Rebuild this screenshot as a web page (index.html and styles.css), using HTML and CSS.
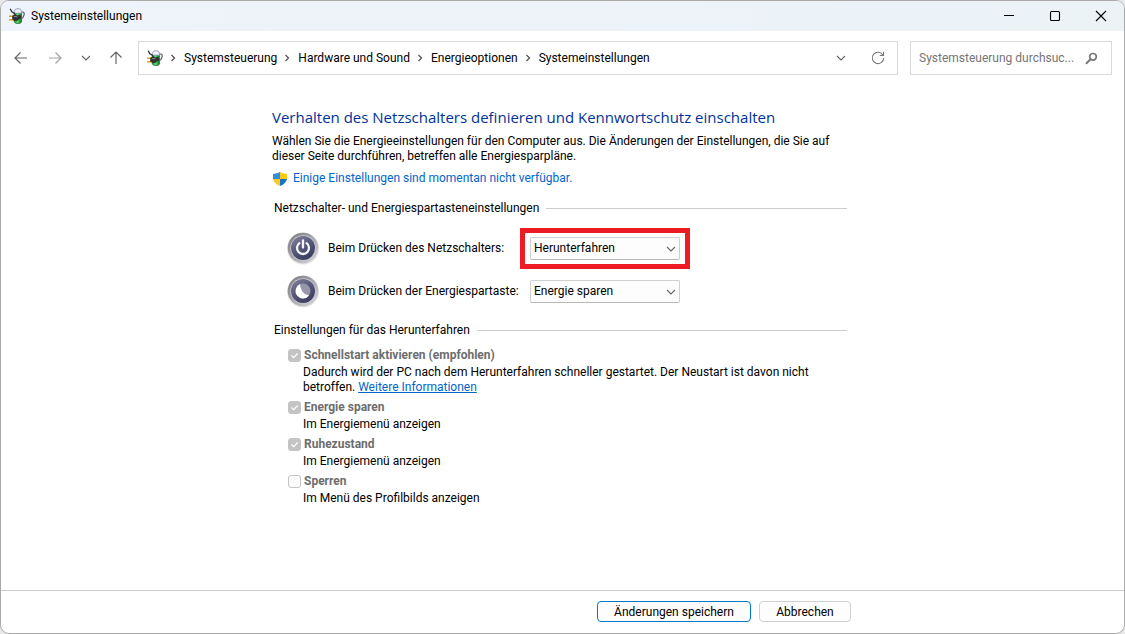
FILE: index.html
```html
<!DOCTYPE html>
<html lang="de">
<head>
<meta charset="utf-8">
<meta name="viewport" content="width=device-width, initial-scale=1">
<title>Systemeinstellungen</title>
<link rel="stylesheet" href="styles.css">
</head>
<body>
<svg width="0" height="0" class="defs" aria-hidden="true">
  <defs>
    <linearGradient id="cell" x1="0" x2="1"><stop offset="0" stop-color="#1d8a2c"/><stop offset=".45" stop-color="#4fe066"/><stop offset="1" stop-color="#0d6a1c"/></linearGradient>
    <linearGradient id="rim" x1="0" x2="1" y1="0" y2="1"><stop offset="0" stop-color="#77777b"/><stop offset=".5" stop-color="#a9a9ad"/><stop offset="1" stop-color="#dcdce0"/></linearGradient>
    <linearGradient id="face" x1="0" x2=".6" y1="0" y2="1"><stop offset="0" stop-color="#85859f"/><stop offset=".5" stop-color="#5b5b7c"/><stop offset="1" stop-color="#3d3d60"/></linearGradient>
    <symbol id="battery" viewBox="0 0 16 16">
      <path d="M12 4h2q1.500.4 1.200 2.500l-1.700 4" fill="none" stroke="#5b6268" stroke-width="1.200"/>
      <path d="M5.200 4v9.300Q5.500 15.700 9 15.700t3.600-2.400V4z" fill="url(#cell)" stroke="#27613a" stroke-width=".7"/>
      <path d="M5.200 3.500Q5.500.6 9 .6t3.600 2.900v1.700H5.200z" fill="#eef0fb" stroke="#7d87b3" stroke-width=".7"/>
      <path d="M1.200.7l1.600 3 2.500 1.500 1 2" fill="none" stroke="#333" stroke-width="1.300"/>
      <path d="M0 8.300h4M0 11.700h4" stroke="#d9a514" stroke-width="1.600"/>
      <path d="M3.200 7.800L6 6.500l2.600 1 1.900-.7 1.600 1.200v2.500l-2.300 1-1.800 1.600-3-.3-1.800-1.500z" fill="#303030"/>
      <path d="M4.800 8.500l3.700.3" stroke="#8c8c8c"/>
    </symbol>
    <symbol id="crumb" viewBox="0 0 6 8"><path d="M1.500 1L4.500 4l-3 3" fill="none" stroke="#555" stroke-width="1.300"/></symbol>
    <symbol id="down" viewBox="0 0 10 6"><path d="M1 1l4 4 4-4" fill="none" stroke="currentColor" stroke-width="1.100"/></symbol>
    <symbol id="tick" viewBox="0 0 13 13"><path d="M3.500 6.500l2.200 2.200 4-4.200" fill="none" stroke="#fff" stroke-width="1.100"/></symbol>
  </defs>
</svg>
<div class="window">
  <header class="titlebar">
    <svg class="app-icon" aria-hidden="true"><use href="#battery"/></svg>
    <span class="title">Systemeinstellungen</span>
    <button class="caption" aria-label="Minimieren"><svg width="12" height="12"><path d="M1 5.500h10" stroke="#000"/></svg></button>
    <button class="caption" aria-label="Maximieren"><svg width="12" height="12"><rect x="1.500" y="1.500" width="9" height="9" rx="1" fill="none" stroke="#000" stroke-width="1.100"/></svg></button>
    <button class="caption" aria-label="Schließen"><svg width="12" height="12"><path d="M1 1l10 10M11 1L1 11" stroke="#000" stroke-width="1.100"/></svg></button>
  </header>
  <nav class="toolbar" aria-label="Navigation">
    <div class="history">
      <button class="nav-button" aria-label="Zurück"><svg width="14" height="14"><path d="M13 7H1.500M6.500 1.500L1 7l5.500 5.500" fill="none" stroke="#666" stroke-width="1.200"/></svg></button>
      <button class="nav-button" aria-label="Vorwärts"><svg width="14" height="14"><path d="M1 7h11.500M7.500 1.500L13 7l-5.500 5.500" fill="none" stroke="#a2a2a2" stroke-width="1.200"/></svg></button>
      <button class="nav-button narrow" aria-label="Zuletzt besucht"><svg width="10" height="6"><use href="#down"/></svg></button>
      <button class="nav-button" aria-label="Nach oben"><svg width="14" height="14"><path d="M7 13V1.500M1.500 6.500L7 1l5.500 5.500" fill="none" stroke="#666" stroke-width="1.200"/></svg></button>
    </div>
    <div class="address">
      <svg class="app-icon" aria-hidden="true"><use href="#battery"/></svg>
      <ol class="crumbs">
        <li><svg class="crumb"><use href="#crumb"/></svg><a href="#">Systemsteuerung</a></li>
        <li><svg class="crumb"><use href="#crumb"/></svg><a href="#">Hardware und Sound</a></li>
        <li><svg class="crumb"><use href="#crumb"/></svg><a href="#">Energieoptionen</a></li>
        <li><svg class="crumb"><use href="#crumb"/></svg><a href="#">Systemeinstellungen</a></li>
      </ol>
      <button class="nav-button" aria-label="Vorherige Orte"><svg width="10" height="6"><use href="#down"/></svg></button>
      <button class="nav-button refresh" aria-label="Aktualisieren"><svg width="14" height="14"><path d="M12 4.200A5.700 5.700 0 1 0 12.700 7M12.500.8v3.700H8.800" fill="none" stroke="#777" stroke-width="1.100"/></svg></button>
    </div>
    <div class="search">
      <input type="text" aria-label="Systemsteuerung durchsuchen" placeholder="Systemsteuerung durchsuc...">
      <svg width="13" height="13" aria-hidden="true"><circle cx="8" cy="4.800" r="3.300" fill="none" stroke="#777" stroke-width="1.700"/><path d="M5.500 7.300L1 11.800" stroke="#777" stroke-width="2"/></svg>
    </div>
  </nav>
  <main class="page">
    <div class="content">
      <h1>Verhalten des Netzschalters definieren und Kennwortschutz einschalten</h1>
      <p class="intro">Wählen Sie die Energieeinstellungen für den Computer aus. Die Änderungen der Einstellungen, die Sie auf dieser Seite durchführen, betreffen alle Energiesparpläne.</p>
      <a class="elevate" href="#">
        <svg width="14" height="14" viewBox="0 0 14 14" aria-hidden="true"><path d="M7 0Q4.500 1.700 0 2v5h7z" fill="#2e8fdf"/><path d="M7 0q2.500 1.700 7 2v5H7z" fill="#ffc914"/><path d="M0 7h7v7Q1 11.500 0 7z" fill="#ffc914"/><path d="M14 7H7v7q6-2.500 7-7z" fill="#1673c7"/></svg>
        Einige Einstellungen sind momentan nicht verfügbar.</a>
      <section>
        <h2>Netzschalter- und Energiespartasteneinstellungen</h2>
        <div class="setting">
          <svg width="34" height="34" viewBox="0 0 34 34" aria-hidden="true"><circle cx="17" cy="16.500" r="16" fill="#e3e3e6"/><circle cx="17" cy="16" r="15.300" fill="url(#rim)"/><circle cx="17" cy="16" r="12.700" fill="#c9c9d5"/><circle cx="17" cy="16" r="12" fill="url(#face)"/><path d="M13.400 11.200a6 6 0 1 0 7.200 0" fill="none" stroke="#f4f4f8" stroke-width="2.300" stroke-linecap="round"/><path d="M17 8.500v7" stroke="#f4f4f8" stroke-width="2.300" stroke-linecap="round"/></svg>
          <label for="power">Beim Drücken des Netzschalters:</label>
          <div class="marked"><div class="combo"><select id="power"><option>Herunterfahren</option><option>Energie sparen</option></select><svg width="10" height="6"><use href="#down"/></svg></div></div>
        </div>
        <div class="setting">
          <svg width="34" height="34" viewBox="0 0 34 34" aria-hidden="true"><circle cx="17" cy="16.500" r="16" fill="#e3e3e6"/><circle cx="17" cy="16" r="15.300" fill="url(#rim)"/><circle cx="17" cy="16" r="12.700" fill="#c9c9d5"/><circle cx="17" cy="16" r="12" fill="url(#face)"/><circle cx="17" cy="16" r="7.500" fill="#9797aa"/><path d="M14 9.100a7.500 7.500 0 1 0 9 11.400Q14.500 19 14 9.100z" fill="#fff"/></svg>
          <label for="sleep">Beim Drücken der Energiespartaste:</label>
          <div class="combo"><select id="sleep"><option>Energie sparen</option><option>Herunterfahren</option></select><svg width="10" height="6"><use href="#down"/></svg></div>
        </div>
      </section>
      <section class="shutdown">
        <h2>Einstellungen für das Herunterfahren</h2>
        <div class="option">
          <span class="check"><input type="checkbox" id="fast" checked disabled><svg><use href="#tick"/></svg></span>
          <label for="fast">Schnellstart aktivieren (empfohlen)</label>
          <p>Dadurch wird der PC nach dem Herunterfahren schneller gestartet. Der Neustart ist davon nicht betroffen. <a href="#">Weitere Informationen</a></p>
        </div>
        <div class="option">
          <span class="check"><input type="checkbox" id="standby" checked disabled><svg><use href="#tick"/></svg></span>
          <label for="standby">Energie sparen</label>
          <p>Im Energiemenü anzeigen</p>
        </div>
        <div class="option">
          <span class="check"><input type="checkbox" id="hibernate" checked disabled><svg><use href="#tick"/></svg></span>
          <label for="hibernate">Ruhezustand</label>
          <p>Im Energiemenü anzeigen</p>
        </div>
        <div class="option">
          <span class="check"><input type="checkbox" id="lock" disabled></span>
          <label for="lock">Sperren</label>
          <p>Im Menü des Profilbilds anzeigen</p>
        </div>
      </section>
    </div>
  </main>
  <footer class="footer">
    <div class="actions">
      <button class="button primary">Änderungen speichern</button>
      <button class="button">Abbrechen</button>
    </div>
  </footer>
</div>
</body>
</html>
```
FILE: styles.css
```css
* { box-sizing: border-box; }
body {
  margin: 0;
  background: #e9e9e9;
  color: #000;
  font: 12px/15px Roboto, "Open Sans", sans-serif;
}
button, input, select { font: inherit; color: inherit; }
svg { display: block; flex: none; }
.defs { position: absolute; }
h1, h2, p, ol { margin: 0; padding: 0; }
.window {
  display: flex;
  flex-direction: column;
  min-height: 100vh;
  border: 1px solid #aaa;
  border-radius: 9px;
  background: #fff;
  overflow: hidden;
}
.titlebar {
  display: flex;
  align-items: center;
  height: 30px;
  padding-left: 8px;
  background: linear-gradient(90deg, #eff3fb, #ebf3f7);
}
.app-icon { width: 16px; height: 16px; }
.title { flex: 1; margin-left: 6px; }
.caption {
  display: grid;
  place-items: center;
  width: 46px;
  height: 30px;
  padding: 0;
  border: 0;
  background: none;
}
.toolbar {
  display: flex;
  align-items: center;
  padding: 10px 12px 0 9px;
}
.history { display: flex; width: 128px; }
.nav-button {
  display: grid;
  place-items: center;
  width: 24px;
  height: 24px;
  margin-right: 11px;
  padding: 0;
  border: 0;
  background: none;
  color: #666;
}
.nav-button.narrow { width: 18px; margin-right: 9px; }
.address {
  display: flex;
  flex: 1;
  align-items: center;
  height: 34px;
  padding-left: 8px;
  border: 1px solid #d9d9d9;
}
.address .refresh { margin: 0 7px 0 2px; }
.crumbs { display: flex; flex: 1; list-style: none; }
.crumbs li { display: flex; align-items: center; }
.crumbs a { color: inherit; text-decoration: none; }
.crumb { width: 6px; height: 8px; margin: 0 8px 0 7px; }
.search {
  display: flex;
  align-items: center;
  width: 202px;
  height: 34px;
  margin-left: 12px;
  padding: 0 13px 0 8px;
  border: 1px solid #d9d9d9;
}
.search input {
  flex: 1;
  min-width: 0;
  padding: 0;
  border: 0;
  outline: 0;
  background: none;
}
.search input::placeholder { color: #757575; opacity: 1; }
.page { flex: 1; padding: 32px 6px 24px 0; }
.content { max-width: 575px; margin: 0 auto; }
h1 {
  color: #003399;
  font-family: "Open Sans", sans-serif;
  font-size: 15px;
  line-height: 20px;
  font-weight: 400;
}
.intro { margin-top: 7px; }
.elevate {
  display: flex;
  align-items: center;
  gap: 6px;
  margin: 7px 0 0 1px;
  color: #0066cc;
  text-decoration: none;
}
section { margin: 15px 0 0 2px; }
h2 {
  display: flex;
  align-items: center;
  gap: 7px;
  font-size: 12px;
  line-height: 15px;
  font-weight: 400;
}
h2::after { content: ""; flex: 1; height: 1px; background: #ccc; }
.setting {
  display: grid;
  grid-template-columns: 34px 202px auto;
  align-items: center;
  justify-content: start;
  height: 43px;
  padding-left: 12px;
}
h2 + .setting { margin-top: 11px; }
.setting label { padding-left: 8px; white-space: nowrap; }
.setting > .combo { margin-left: 8px; }
.marked {
  margin-left: -2px;
  padding: 4px 5px;
  border: 5px solid #ed1c24;
}
.combo { display: grid; width: 150px; align-items: center; }
.combo > * { grid-area: 1 / 1; }
.combo svg { justify-self: end; margin-right: 4px; color: #666; pointer-events: none; }
.combo select {
  appearance: none;
  width: 100%;
  height: 23px;
  padding: 0 20px 0 3px;
  border: 1px solid #d0d0d0;
  border-bottom-color: #b8b8b8;
  border-radius: 2px;
  background: #fdfdfd;
}
.shutdown { margin-top: 10px; }
.option {
  display: grid;
  grid-template-columns: 13px 1fr;
  column-gap: 3px;
  row-gap: 2px;
  align-items: center;
  margin-bottom: 5px;
  padding-left: 14px;
}
h2 + .option { margin-top: 10px; }
.option label { color: #6d6d6d; font-weight: 700; }
.option p { grid-column: 2; margin-left: -1px; padding-right: 30px; }
.option a { color: #0066cc; }
.check { display: grid; }
.check > * { grid-area: 1 / 1; width: 13px; height: 13px; }
.check input {
  appearance: none;
  margin: 0;
  border: 1px solid #c4c4c4;
  border-radius: 3px;
  background: #fafafa;
}
.check input:checked { background: #c4c4c4; }
.footer { padding: 10px 6px 11px 0; border-top: 1px solid #ccc; }
.actions { display: flex; justify-content: flex-end; gap: 8px; max-width: 583px; margin: 0 auto; }
.button {
  min-width: 92px;
  height: 21px;
  padding: 1px 12px 0;
  border: 1px solid #d0d0d0;
  border-radius: 4px;
  background: #fdfdfd;
  line-height: 18px;
}
.button.primary { min-width: 154px; border-color: #0078c8; }
```
